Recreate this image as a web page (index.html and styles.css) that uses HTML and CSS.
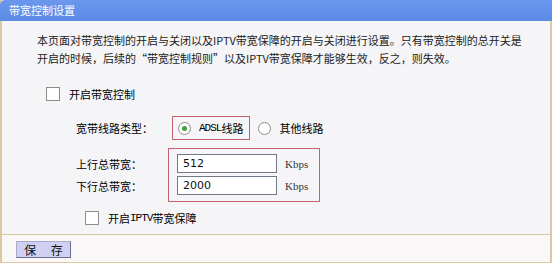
FILE: index.html
```html
<!DOCTYPE html>
<html lang="zh-CN">
<head>
	<meta charset="UTF-8">
	<title>带宽控制设置</title>
	<link rel="stylesheet" href="styles.css">
</head>
<body>
	<div class="panel">
		<div class="title">带宽控制设置</div>
		<div class="content">
			<p class="desc">本页面对带宽控制的开启与关闭以及IPTV带宽保障的开启与关闭进行设置。只有带宽控制的总开关是<br>开启的时候，后续的“带宽控制规则”以及IPTV带宽保障才能够生效，反之，则失效。</p>

			<label class="check-row main-switch"><span class="check"></span>开启带宽控制</label>

			<div class="form-row type-row">
				<span class="label">宽带线路类型：</span>
				<span class="mark-box type-box"><span class="radio on"></span><span class="en">ADSL</span>线路</span>
				<span class="radio"></span>其他线路
			</div>

			<div class="form-row bw-row">
				<div class="label-col">
					<span class="label">上行总带宽：</span>
					<span class="label">下行总带宽：</span>
				</div>
				<div class="mark-box bw-box">
					<div class="bw-line"><span class="input">512</span><span class="unit">Kbps</span></div>
					<div class="bw-line"><span class="input">2000</span><span class="unit">Kbps</span></div>
				</div>
			</div>

			<label class="check-row iptv"><span class="check"></span>开启<span class="en">IPTV</span>带宽保障</label>
		</div>
		<div class="footer">
			<button class="save" type="button">保 存</button>
		</div>
	</div>
</body>
</html>
```

FILE: styles.css
```css
body{
	margin: 0;
	background: #fff;
	font-family: "Noto Sans CJK SC", "Liberation Sans", sans-serif;
	font-size: 11px;
	color: #000;
}
.panel{
	width: 548px;
	border-left: 2px solid #dcc7a0;
	border-right: 2px solid #dcc7a0;
	border-bottom: 1px solid #dcc7a0;
}
.title{
	margin: 0 -2px;
	height: 21px;
	line-height: 20px;
	padding-left: 9px;
	background: linear-gradient(#6b98ee, #5b8ae4);
	border-top-left-radius: 5px;
	color: #fff;
	font-size: 11px;
}
.content{
	background: #f5f5f7;
	padding: 10px 0 8px;
}
.desc{
	margin: 0 0 0 35px;
	line-height: 18px;
	color: #222;
}
.en{
	font-family: "Liberation Mono", monospace;
	font-size: 11px;
	letter-spacing: -1px;
}
.check-row{
	display: flex;
	align-items: center;
	height: 16px;
}
.main-switch{
	margin: 19px 0 0 44px;
}
.iptv{
	margin: 8px 0 0 83px;
}
.check{
	width: 12px;
	height: 12px;
	border: 1px solid #8c8c8c;
	background: #fff;
	margin-right: 9px;
}
.form-row{
	display: flex;
	align-items: center;
	margin-left: 74px;
}
.label{
	width: 92px;
	line-height: 22px;
}
.mark-box{
	border: 1px solid #c4606a;
}
.type-row{
	margin-top: 14px;
}
.type-box{
	display: flex;
	align-items: center;
	height: 22px;
	margin-left: 4px;
	padding: 0 6px 0 5px;
}
.type-box + .radio{
	margin-left: 8px;
}
.radio{
	width: 11px;
	height: 11px;
	border: 1px solid #8c8c8c;
	border-radius: 50%;
	background: #fff;
	margin-right: 8px;
	display: flex;
	align-items: center;
	justify-content: center;
}
.radio.on::after{
	content: "";
	width: 5px;
	height: 5px;
	border-radius: 50%;
	background: #3ea33e;
}
.bw-row{
	margin-top: 8px;
}
.label-col{
	display: flex;
	flex-direction: column;
}
.bw-box{
	padding: 5px 11px 6px 8px;
}
.bw-line{
	display: flex;
	align-items: center;
	height: 19px;
}
.bw-line + .bw-line{
	margin-top: 3px;
}
.input{
	box-sizing: border-box;
	width: 100px;
	height: 19px;
	border: 1px solid #6f7a86;
	background: #fff;
	padding-left: 5px;
	font-family: "DejaVu Sans", sans-serif;
	font-size: 11px;
	line-height: 17px;
	color: #111;
}
.unit{
	margin-left: 8px;
	font-family: "Liberation Serif", serif;
	font-size: 11px;
	color: #333;
}
.footer{
	border-top: 1px solid #d9c39c;
	background: #faf7f9;
	height: 21px;
	padding: 6px 0 0 14px;
}
.save{
	display: block;
	width: 55px;
	height: 17px;
	padding: 0 0 0 6px;
	background: #cfd0f4;
	border: 1px solid #6d6f8a;
	border-top-color: #a9abc8;
	border-left-color: #a9abc8;
	font-family: "Noto Sans CJK SC", sans-serif;
	font-size: 12px;
	line-height: 15px;
	letter-spacing: 6px;
	color: #111;
}
```
